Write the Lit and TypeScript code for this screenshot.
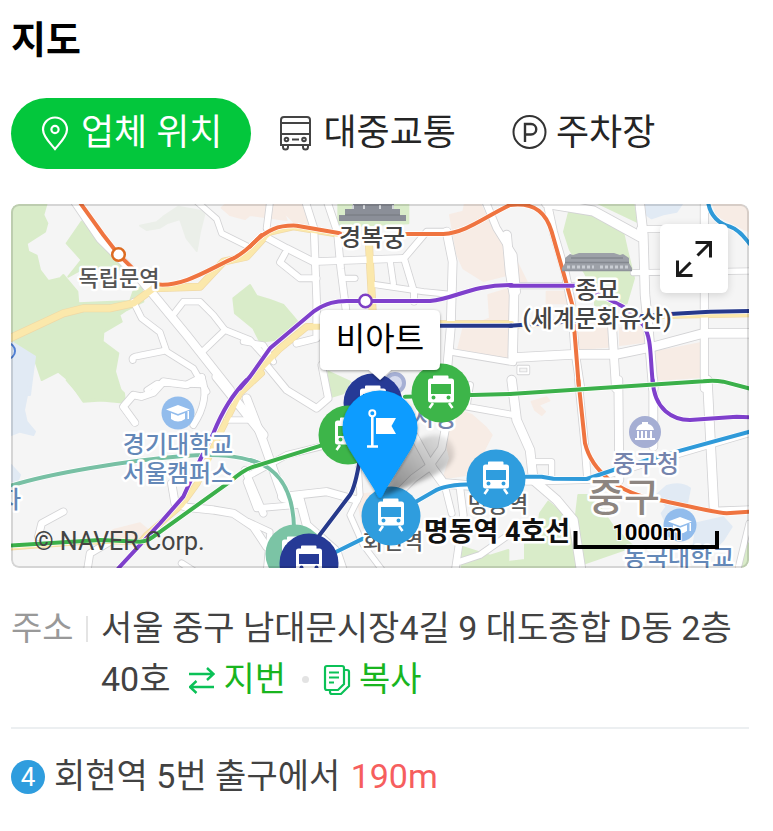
import { LitElement, html, css, svg } from "lit";
import { customElement, state } from "lit/decorators.js";

type Shape = [sheet: string, d: string, width?: number];

// Each sheet of the map is surveyed at three units to the map unit.
const SHEETS: Record<string, string> = {
  a: "translate(0 195) scale(.33333)",
  b: "translate(250 195) scale(.33333)",
  c: "translate(510 195) scale(.33333)",
  d: "translate(0 380) scale(.33333)",
  e: "translate(250 365) scale(.33333)",
  f: "translate(510 380) scale(.33333)",
};

const PARKS: Shape[] = [
  ["a", "M33 25H140L130 60L142 85L135 110L80 145L85 170L110 182L120 225L145 258L180 250L190 240L232 290L235 325L390 318L400 290L425 275L430 320L380 345L358 360L365 380L310 412L308 440L355 475L345 530L370 612L250 620L205 555L175 530L125 555L100 480L60 455L33 440Z"],
  ["a", "M245 80L200 145L245 195L205 245L260 215L340 225L380 220L345 170L300 130Z"],
  ["b", "M0 270L-50 310L-45 355L10 400L30 440L100 432L150 390L130 365L100 330L60 315L20 303Z"],
  ["b", "M265 25H475V85L265 95Z"],
  ["c", "M180 40L162 110L180 165L225 235L255 300L255 330L300 340L350 325L372 250L350 160L340 115L290 80L240 50Z"],
  ["c", "M265 25H370L380 80Z"],
  ["d", "M200 0L250 58L290 60L375 68L372 40L330 0Z"],
  ["e", "M235 20L300 50L280 85L245 95Z"],
  ["e", "M635 545L720 572L775 555V610H635Z"],
  ["f", "M205 345H245L310 440L370 500L190 562H0V545L45 540V490L80 480L90 400L115 365L195 430Z"],
  ["f", "M717 490L690 562H717Z"],
];

const PALE_PARKS: Shape[] = [
  ["a", "M535 35L490 65L470 82L420 92L440 105L480 98L500 85L540 72L560 130L590 168L600 110L615 50Z"],
];

const WATER: Shape[] = [
  ["a", "M33 440L105 485L95 560L90 600H33Z"],
  ["d", "M33 0H90L72 90L80 125L105 155L100 165L60 155L33 165Z"],
  ["d", "M33 255L60 285L50 310L33 315Z"],
  ["c", "M405 25H517L500 50L460 58L425 70L408 58Z"],
  ["f", "M440 345L470 318Q510 305 540 325L530 375L505 400L475 445L455 400L470 380Z"],
  ["f", "M560 430L640 412L665 440L640 480L620 500H550Z"],
];

const BLOCKS: Shape[] = [
  ["a", "M665 38L690 60L735 72L750 60L860 75L840 25H680Z"],
  ["b", "M75 25H160L185 80L190 110L130 80Z"],
  ["b", "M600 60L640 50L645 25H690L720 90L770 130V240L700 258L640 220L622 180Z"],
  ["b", "M715 300L780 280V490L625 460L640 400L720 370Z"],
  ["c", "M20 200L50 260H0V205Z"],
  ["c", "M110 290H165L175 325H110Z"],
  ["c", "M205 400L290 385L295 455L205 462Z"],
  ["c", "M330 400L405 395V440L330 450Z"],
  ["c", "M440 470L570 445L582 545L440 555Z"],
  ["c", "M610 25H690L717 50V110L620 60Z"],
  ["e", "M640 140L665 150L710 190L725 210L700 260L690 300L650 330L580 340L600 280L580 200Z"],
  ["e", "M320 390L400 380V480L340 490Z"],
  ["f", "M65 65L110 52L118 62L85 75L105 95L95 105L75 90Z"],
  ["d", "M340 450L420 430L450 455L420 475L340 470Z"],
];

const ROADS: Shape[] = [
  ["a", "M222 15L300 130L420 250L560 420L690 585", 24],
  ["a", "M585 15L650 72L665 115L745 155", 16],
  ["a", "M400 320L425 370L480 412L500 470L580 520L620 590", 17],
  ["a", "M398 495Q395 485 415 483L490 468", 18],
  ["a", "M515 365L550 320H600L640 360L675 405L605 472", 17],
  ["a", "M675 405L750 435L800 490", 18],
  ["a", "M440 585L470 565L605 570", 14],
  ["b", "M60 20L50 100", 18],
  ["b", "M45 125L110 160L190 200L460 190", 20],
  ["b", "M165 15L192 100L200 320V430L140 445", 20],
  ["b", "M230 15L262 110L272 220L288 345", 20],
  ["b", "M105 175L90 202L150 250H200", 18],
  ["b", "M275 250H315", 16],
  ["b", "M370 268L520 290L600 298", 16],
  ["b", "M420 195L430 265", 16],
  ["b", "M590 110L608 200L602 400L590 540", 24],
  ["b", "M590 110H530L462 190L492 290V320", 18],
  ["b", "M705 15L740 100L790 180L800 290", 20],
  ["b", "M600 470L790 502", 18],
  ["b", "M-20 440L40 450L70 500", 16],
  ["c", "M115 40L130 110L165 230L185 330L195 470L212 580", 22],
  ["c", "M110 25L250 48L390 125", 28],
  ["c", "M388 15L400 120L405 300L415 400L430 580", 26],
  ["c", "M390 102H575", 18],
  ["c", "M370 233L717 228", 16],
  ["c", "M583 15V580", 22],
  ["c", "M0 272L190 272", 16],
  ["c", "M-10 120L0 230L12 300L8 480", 26],
  ["c", "M8 488L190 478L320 478L430 455L580 415H720", 26],
  ["c", "M305 375L318 580", 24],
  ["c", "M25 515H55V535H25Z", 6],
  ["f", "M205 0L225 200L232 292", 20],
  ["f", "M325 0L328 300", 24],
  ["f", "M430 0V200", 24],
  ["f", "M592 0L612 385", 26],
  ["f", "M5 0L20 120L60 210L70 300L140 360L190 420L212 562", 26],
  ["f", "M65 245H125V300", 16],
  ["f", "M50 305L240 300L717 160", 18],
  ["f", "M605 390L717 386", 14],
  ["f", "M717 430L685 562", 16],
  ["e", "M40 -10L110 75L200 130L235 100L215 0", 20],
  ["e", "M-10 100L40 230L100 400L150 410", 24],
  ["e", "M0 330L110 270L210 245L340 215", 18],
  ["e", "M95 395L230 380L320 405", 22],
  ["e", "M150 405L170 480L260 560L280 620", 24],
  ["e", "M-10 350L20 430L140 420", 18],
  ["e", "M-5 470L60 500L50 610", 16],
  ["e", "M480 190L540 300L575 250L590 170", 22],
  ["e", "M540 300L580 355L790 372", 26],
  ["e", "M430 400L490 340L545 300", 22],
  ["e", "M585 365L605 445", 18],
  ["e", "M630 370L640 450L615 620", 20],
  ["e", "M660 60L650 125L790 150", 18],
  ["e", "M325 310L330 390L300 450L340 540L400 620", 16],
  ["e", "M630 590L690 570L790 500", 18],
  ["d", "M405 128L370 80L400 45L425 50L460 38L490 5L560 15L605 -8", 20],
  ["d", "M605 -8Q630 60 580 135", 18],
  ["d", "M650 -10L790 165", 26],
  ["d", "M680 120H745", 16],
  ["d", "M115 470L125 430L190 395", 20],
  ["d", "M515 310L525 370L560 382L640 390L700 400L760 440L800 500", 22],
  ["d", "M735 270L790 400", 20],
  ["d", "M262 570L270 520L330 485", 20],
  ["d", "M545 550L600 585", 18],
];

const AVENUES: Shape[] = [
  ["a", "M25 432L190 355L250 340L330 340L400 325L460 280L600 275L670 200L740 185L790 130", 20],
  ["b", "M-10 175L60 112L130 96L290 122", 16],
  ["b", "M357 150L368 350", 20],
  ["b", "M-20 575L90 460L170 395H230", 18],
  ["d", "M785 -20L720 40L645 190L592 310L545 375L440 465L425 482", 16],
  ["d", "M25 503L270 484L430 485", 14],
  ["b", "M560 385H785", 14],
  ["c", "M0 393L190 378L400 364L720 358", 14],
];

const LINES: { color: string; paths: Shape[] }[] = [
  { color: "#78c0a4", paths: [
    ["d", "M33 317C150 280 380 242 550 228C650 221 720 225 790 255"],
    ["e", "M0 285C80 305 130 370 132 490"],
  ] },
  { color: "#ef7440", paths: [
    ["a", "M238 20L310 120L355 178L400 222"],
    ["a", "M470 268C550 278 640 215 700 190C735 173 760 145 785 120"],
    ["b", "M0 155C50 100 90 90 140 92L270 115"],
    ["b", "M470 117H580C650 112 700 68 780 30"],
    ["c", "M0 30C80 20 110 60 125 110L165 250L187 330L207 580"],
    ["f", "M205 0L225 190C245 270 320 340 450 361C520 375 600 395 650 400L720 395"],
  ] },
  { color: "#7f40cc", paths: [
    ["b", "M-30 580L0 545L60 460L190 350C230 322 260 318 290 318H540C620 310 660 270 785 270"],
    ["c", "M0 272H200L290 310L340 335L400 390C425 430 420 480 428 560"],
    ["f", "M428 0C432 90 490 120 540 120L680 110L720 112"],
    ["d", "M740 0C690 50 660 110 640 160L600 240L550 350L480 430L355 565"],
  ] },
  { color: "#26398b", paths: [
    ["b", "M570 392H785"],
    ["c", "M0 392L200 378L480 357L600 350L720 348"],
    ["e", "M330 280C320 340 310 375 300 390L205 515"],
  ] },
  { color: "#3bb04a", paths: [
    ["d", "M30 497L300 480L420 485Q440 485 460 470L690 305Q730 270 755 262L965 196"],
    ["e", "M465 95L780 87"],
    ["f", "M0 42L580 4Q610 0 640 5L720 26"],
  ] },
  { color: "#2f9ad9", paths: [
    ["e", "M250 565L345 518"],
    ["e", "M490 415L550 380C580 362 620 358 670 358"],
    ["f", "M40 290H95L130 296L230 297L310 270L500 215L720 155"],
    ["c", "M594 20C600 60 625 85 660 95C690 105 705 130 720 148"],
  ] },
];

type Label = [text: string, x: number, y: number, kind: string];
const LABELS: Label[] = [
  ["독립문역", 119, 286, "station"],
  ["경복궁", 372, 246, "place"],
  ["종묘", 597, 298, "place"],
  ["(세계문화유산)", 597, 327, "place"],
  ["경기대학교", 178, 453, "school"],
  ["서울캠퍼스", 178, 482, "school"],
  ["중구청", 646, 472, "office"],
  ["동국대학교", 679, 566, "school"],
  ["자", 10, 508, "school"],
  ["시청", 434, 426, "office"],
  ["명동역", 498, 512, "station"],
  ["회현역", 393, 549, "station"],
];

const NAVY = "#263a96";
const GREEN = "#3db549";
const BLUE = "#2f9dde";

const strokes = (list: Shape[], color: string, extra = 0, base = 12) =>
  list.map(([sheet, d, w]) => svg`<path transform=${SHEETS[sheet]} d=${d} fill="none"
    stroke=${color} stroke-width=${(w ?? base) + extra} stroke-linejoin="round" stroke-linecap="round"/>`);

const areas = (list: Shape[], color: string) =>
  list.map(([sheet, d]) => svg`<path transform=${SHEETS[sheet]} d=${d} fill=${color}
    stroke=${color} stroke-width="6" stroke-linejoin="round"/>`);

const stop = (x: number, y: number, color: string) => svg`
  <g transform="translate(${x} ${y})">
    <circle r="29.5" fill=${color}/>
    <path fill="#fff" fill-rule="evenodd" d="M-8-14.500V-16.500Q-8-17.500-7-17.500H6.500Q7.500-17.500 7.500-16.500V-14.500H10.500Q13-14.500 13-12V7Q13 9.500 10.500 9.500H-10.500Q-13 9.500-13 7V-12Q-13-14.500-10.500-14.500ZM-10-9V1H10V-9ZM-9.500 4.500A2 2 0 1 0-5.500 4.500A2 2 0 1 0-9.500 4.500ZM5.500 4.500A2 2 0 1 0 9.500 4.500A2 2 0 1 0 5.500 4.500Z"/>
    <path d="M-8 10L-11.500 15M8 10L11.500 15" stroke="#fff" stroke-width="2.600"/>
  </g>`;

const cap = (x: number, y: number) => svg`
  <g transform="translate(${x} ${y})">
    <circle r="16.500" fill="#92bcec"/>
    <path fill="#fff" d="M0-8L12-3.500L0 1L-12-3.500ZM-7 0L0 2.800L7 0V6Q0 11 -7 6ZM9.500-2H11V6H9.500Z"/>
  </g>`;

@customElement("place-map")
class PlaceMap extends LitElement {
  static styles = css`
    :host { display: block; position: relative; }
    .frame { display: block; width: 100%; height: auto; border-radius: 8px; }
    .wrap { position: relative; border-radius: 8px; overflow: hidden; }
    .wrap::after {
      content: ""; position: absolute; inset: 0; border-radius: 8px;
      border: 2px solid rgba(0, 0, 0, 0.13); pointer-events: none;
    }
    text {
      font-family: Roboto, "Noto Sans CJK KR", sans-serif;
      text-anchor: middle; paint-order: stroke; stroke: #fff;
      stroke-width: 5px; stroke-linejoin: round; font-weight: 500;
    }
    .station { font-size: 22px; fill: #555; }
    .place { font-size: 24px; fill: #444; }
    .school { font-size: 24px; fill: #6488b8; }
    .office { font-size: 24px; fill: #7584ad; }
    .district { font-size: 39px; fill: #8d8580; }
    .current { font-size: 27px; font-weight: 700; fill: #111; }
    .scale { font-size: 22px; font-weight: 700; fill: #000; stroke-width: 2px; }
    .credit { font-size: 25px; font-weight: 400; fill: #444; text-anchor: start; stroke: none; }
    .name { font-size: 32px; font-weight: 400; fill: #000; stroke: none; }
    .expand {
      position: absolute; top: 20px; right: 21px; width: 68px; height: 69px;
      padding: 0; border: 0; border-radius: 6px; background: #fff;
      box-shadow: 0 2px 8px rgba(0, 0, 0, 0.14); cursor: pointer;
      display: grid; place-items: center;
    }
  `;

  render() {
    return html`
      <div class="wrap">
        <svg class="frame" viewBox="11 204 738 364" role="img" aria-label="비아트 지도">
          <defs>
            <linearGradient id="shade" x1="0" y1="1" x2="1" y2="0">
              <stop offset="0" stop-color="#000" stop-opacity=".5"/>
              <stop offset="1" stop-color="#000" stop-opacity=".05"/>
            </linearGradient>
            <filter id="haze" x="-20%" y="-20%" width="140%" height="140%">
              <feGaussianBlur stdDeviation="2"/>
            </filter>
            <filter id="soft" x="-20%" y="-20%" width="140%" height="140%">
              <feDropShadow dx="0" dy="1" stdDeviation="1.500" flood-opacity=".4"/>
            </filter>
          </defs>
          <rect x="11" y="204" width="738" height="364" fill="#f5f5f5"/>
          ${areas(BLOCKS, "#f7ece5")} ${areas(PARKS, "#d9ecc9")}
          ${areas(PALE_PARKS, "#ebefe9")} ${areas(WATER, "#e1eaf4")}
          ${strokes(ROADS, "#d3d3d5", 5)} ${strokes(AVENUES, "#efd8a6", 4)}
          ${strokes(ROADS, "#ffffff")} ${strokes(AVENUES, "#fbe8ab")}
          ${LINES.map((l) => svg`${strokes(l.paths, "#ffffff", 4)}${strokes(l.paths, l.color)}`)}
          <circle cx="7" cy="351" r="8" fill="none" stroke="#4f7fd4" stroke-width="2"/>
          <circle cx="118.500" cy="254.500" r="6.300" fill="#fff" stroke="#dd6b20" stroke-width="2.500"/>
          <circle cx="365.500" cy="301" r="6.300" fill="#fff" stroke="#7d3fc4" stroke-width="2.500"/>
          <g fill="#8b8f98">
            <path d="M339 215H345V209H353V204H394V209H400V215H406V221H339Z"/>
            <path d="M353 205V209M364 205V209M380 205V209M393 205V209" stroke="#d5d8dc" stroke-width="2"/>
            <path d="M345 215H400" stroke="#75787f"/>
          </g>
          <g>
            <path fill="#9da1a8" d="M562 271V268L565 263V258L570 254L573 255L579 253H614L620 255L623 254L629 258V263L632 268V271Z"/>
            <path d="M565 262.500H629M571 258H623" stroke="#84888f" stroke-width="1.500"/>
            <path d="M567 267H594M600 267H629" stroke="#c9cdd3" stroke-width="3" stroke-dasharray="3 2"/>
            <path d="M562 270.500H632" stroke="#8f939a" stroke-width="1.500"/>
          </g>
          ${cap(178, 413)} ${cap(680, 525)}
          <g transform="translate(645 432)">
            <circle r="16" fill="#a5aed3"/>
            <path fill="#fff" d="M-9-2Q-8-7-3-8V-10H3V-8Q8-7 9-2ZM-8-1H-6V6H-8ZM-4-1H-2V6H-4ZM0-1H2V6H0ZM5-1H7V6H5ZM-10 6H10V8H-10Z"/>
          </g>
          <circle cx="395" cy="383" r="9" fill="#d6dbee" stroke="#a5afd4" stroke-width="4"/>
          ${LABELS.map(([t, x, y, kind]) => svg`<text class=${kind} x=${x} y=${y}>${t}</text>`)}
          <text class="district" x="624" y="511">중구</text>
          ${stop(295, 554, "#7bc4a5")} ${stop(309, 563, NAVY)}
          ${stop(373, 403, NAVY)} ${stop(348, 435, GREEN)} ${stop(441, 393, GREEN)}
          ${stop(496, 479, BLUE)} ${stop(391, 516, BLUE)}
          <path d="M382 497C395 478 401 445 425 437C443 430 457 442 454 457C449 474 411 484 382 497Z" fill="url(#shade)" filter="url(#haze)"/>
          <g filter="url(#soft)">
            <path fill="#079cff" d="M380 498C378 498 376 493 374 489L349 449C345 442 342.500 435 342.500 428A37.500 37.500 0 0 1 417.500 428C417.500 435 415 442 411 449L386 489C384 493 382 498 380 498Z"/>
          </g>
          <g fill="none" stroke="#fff">
            <circle cx="372.300" cy="413.300" r="3" stroke-width="2"/>
            <path d="M372.300 416V446M367 446.500H378" stroke-width="2.600"/>
          </g>
          <path fill="#fff" d="M376 418H396L391.500 426L396 434H376Z"/>
          <g filter="url(#soft)">
            <path fill="#fff" d="M326 310H434Q440 310 440 316V364Q440 370 434 370H391L380 380L369 370H326Q320 370 320 364V316Q320 310 326 310Z"/>
          </g>
          <text class="name" x="380" y="350">비아트</text>
          <text class="current" x="497" y="541">명동역 4호선</text>
          <path d="M575.500 531V547H717V531" fill="none" stroke="#000" stroke-width="4"/>
          <text class="scale" x="647" y="540">1000m</text>
          <text class="credit" x="34" y="550">© NAVER Corp.</text>
        </svg>
        <button class="expand" aria-label="지도 크게 보기">
          <svg width="38" height="38" viewBox="0 0 38 38" fill="none" stroke="#1b1b1b" stroke-width="3">
            <path d="M22.500 15.500L36 2M20.500 2.500H35.500V17.500M15.500 22.500L2 36M2.500 20.500V35.500H17.500"/>
          </svg>
        </button>
      </div>
    `;
  }
}

const PIN = svg`<svg width="28" height="36" viewBox="0 0 28 36" fill="none" stroke="currentColor" stroke-width="2.200">
  <path d="M14 33C10 28 2 21 2 13.500A12 12 0 0 1 26 13.500C26 21 18 28 14 33Z"/><circle cx="14" cy="13.500" r="3.600"/></svg>`;
const BUS = svg`<svg width="32" height="36" viewBox="0 0 32 36" fill="none" stroke="#444" stroke-width="2">
  <path d="M2 29V4Q2 1 5 1H28Q31 1 31 4V29ZM2 7H31M2 18H31M13 23.500H20M4 29V31Q4 33.500 6.500 33.500Q9 33.500 9 31V29M24 29V31Q24 33.500 26.500 33.500Q29 33.500 29 31V29"/>
  <circle cx="7.500" cy="23.500" r="1.800"/><circle cx="25" cy="23.500" r="1.800"/></svg>`;
const PARKING = svg`<svg width="36" height="40" viewBox="0 0 36 40" fill="none" stroke="#333" stroke-width="2">
  <circle cx="17.500" cy="18" r="16"/><path stroke-width="2.400" d="M13 28V10H19A5.200 5.200 0 0 1 19 20.500H13"/></svg>`;

@customElement("app-root")
class AppRoot extends LitElement {
  @state() private active = 0;

  static styles = css`
    :host {
      display: block; background: #fff; color: #424242;
      font: 400 34px/51px Roboto, "Noto Sans CJK KR", sans-serif;
    }
    * { box-sizing: border-box; }
    main { padding: 12px 24px 24px 11px; }
    h2 { margin: 0; font-size: 38px; line-height: 56px; font-weight: 700; color: #000; }
    .tabs { display: flex; margin: 30px 0 35px; }
    .tab {
      display: flex; align-items: center; gap: 12px; height: 71px; padding: 0 28px;
      border: 0; border-radius: 36px; background: none; color: #252525;
      font: inherit; font-size: 36px; white-space: nowrap; cursor: pointer;
    }
    .tab.parking { gap: 8px; }
    .tab.on { padding: 0 29px 0 30px; background: #03c73c; color: #fff; }
    .tab svg { flex: none; }
    dl { display: flex; margin: 35px 0 22px; }
    dt { display: flex; align-items: center; flex: none; width: 90px; height: 51px; gap: 12px; color: #999; }
    dt::after { content: ""; width: 2px; height: 26px; background: #e4e4e4; }
    dd { margin: 0; }
    .act {
      display: inline-flex; align-items: center; gap: 9px; padding: 0; margin-left: 18px;
      border: 0; background: none; color: #19b51f; font: inherit; vertical-align: top; cursor: pointer;
    }
    .copy::before { content: ""; width: 7px; height: 7px; margin-right: 6px; border-radius: 50%; background: #e3e3e3; }
    .copy { gap: 8px; margin-left: 16px; }
    .exit {
      display: flex; align-items: center; margin: 0; padding-top: 22px;
      border-top: 2px solid #eceff1; white-space: pre;
    }
    .line {
      flex: none; width: 34px; height: 34px; margin-right: 9px; border-radius: 50%;
      background: #2f9dde; color: #fff; font-size: 26px; line-height: 35px; text-align: center;
    }
    .far { margin-left: 2px; color: #f65e5e; }
  `;

  render() {
    const tabs = [
      { text: "업체 위치", icon: PIN, kind: "" },
      { text: "대중교통", icon: BUS, kind: "" },
      { text: "주차장", icon: PARKING, kind: "parking" },
    ];
    return html`
      <main>
        <h2>지도</h2>
        <div class="tabs" role="tablist">
          ${tabs.map((t, i) => html`
            <button class="tab ${t.kind} ${i === this.active ? "on" : ""}" role="tab"
              aria-selected=${i === this.active} @click=${() => (this.active = i)}>
              ${t.icon}<span>${t.text}</span>
            </button>`)}
        </div>
        <place-map></place-map>
        <dl>
          <dt>주소</dt>
          <dd>서울 중구 남대문시장4길 9 대도종합 D동 2층 40호<button class="act">
              <svg width="26" height="28" viewBox="0 0 26 28" fill="none" stroke="#0bc157" stroke-width="2.400">
                <path d="M0 8H24M18 2L24.500 8L18 14M25 21H1M7.500 15L1 21L7.500 27"/>
              </svg>지번</button><button class="act copy">
              <svg width="28" height="32" viewBox="0 0 28 32" fill="none" stroke="#0bc157" stroke-width="2.200">
                <path d="M4 2H19Q21 2 21 4V20L15 26H4Q2 26 2 24V4Q2 2 4 2ZM6 8.500H16M6 13.500H16M6 18.500H11M21 6H24Q26 6 26 8V22L18 30H9Q7 30 7 28V26"/>
              </svg>복사</button></dd>
        </dl>
        <p class="exit"><span class="line">4</span>회현역 5번 출구에서 <span class="far">190m</span></p>
      </main>
    `;
  }
}
